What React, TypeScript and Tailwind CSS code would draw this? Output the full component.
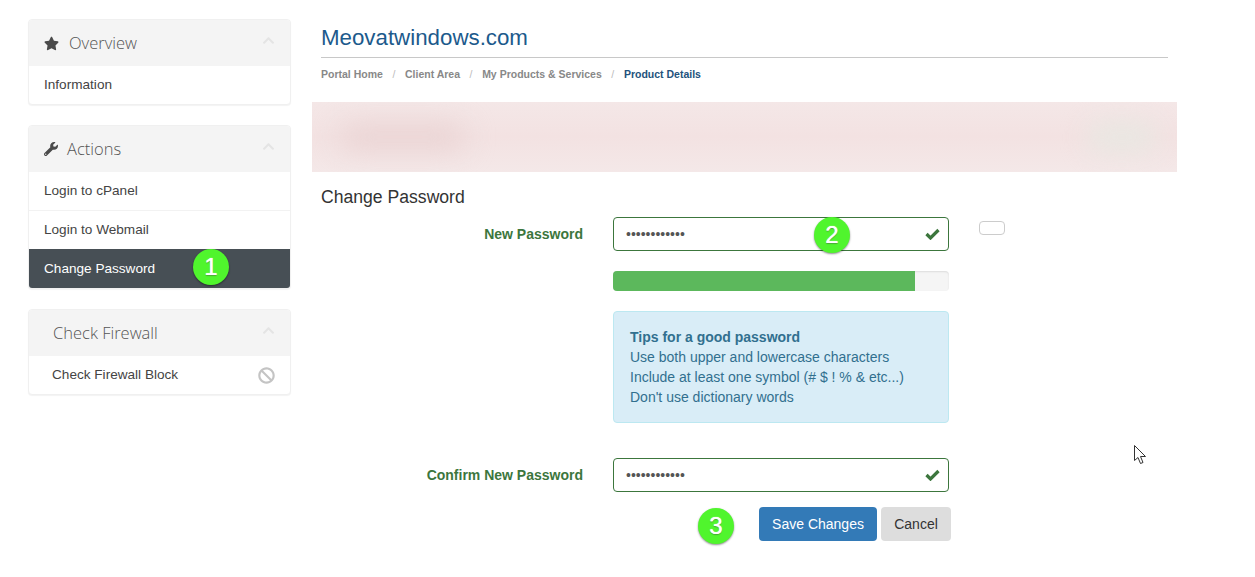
import { FaStar, FaWrench, FaBan, FaChevronUp } from "react-icons/fa";
import type { ReactNode } from "react";

function Badge({ n, className }: { n: number; className: string }) {
  return (
    <span
      className={`absolute flex h-[36px] w-[36px] items-center justify-center rounded-full bg-[#50f52d] text-[24px] text-white shadow-[0_1px_2px_rgba(0,0,0,0.45)] [text-shadow:0_0_1px_#fff,0_1px_1px_rgba(0,0,0,0.35)] ${className}`}
    >
      {n}
    </span>
  );
}

function Panel({
  title,
  icon,
  titleClass,
  children,
}: {
  title: string;
  icon?: ReactNode;
  titleClass?: string;
  children: ReactNode;
}) {
  return (
    <div className="rounded-[4px] border border-[#f0f0f0] bg-white shadow-[0_1px_1px_rgba(0,0,0,0.05)]">
      <div className="flex h-[46px] items-center rounded-t-[3px] bg-[#f4f4f4] pl-[15px] pr-[15px]">
        {icon}
        <h3
          className={`font-['Open_Sans'] text-[16.5px] font-light text-[#555] ${titleClass ?? ""}`}
        >
          {title}
        </h3>
        <FaChevronUp className="ml-auto mb-[5px] text-[13px] text-[#e4e4e4]" />
      </div>
      {children}
    </div>
  );
}

function Field({
  label,
  children,
}: {
  label: string;
  children: ReactNode;
}) {
  return (
    <div className="flex items-start">
      <label className="w-[271px] pt-[9px] text-right text-[14px] leading-[17px] font-bold text-[#3c763d]">
        {label}
      </label>
      <div className="ml-[30px] w-[336px]">{children}</div>
    </div>
  );
}

function PasswordInput() {
  return (
    <div className="relative">
      <input
        type="password"
        readOnly
        defaultValue="abcdefghijkl"
        className="h-[34px] w-full rounded-[4px] border border-[#3c763d] bg-white px-[12px] text-[14px] text-[#555] outline-none"
      />
      <svg
        className="absolute right-[9px] top-[11px]"
        width="15"
        height="12"
        viewBox="0 0 15 12"
      >
        <path d="M1.5 6 L5.5 10 L13.5 2" fill="none" stroke="#3c763d" strokeWidth="3.2" />
      </svg>
    </div>
  );
}

export default function App() {
  return (
    <div className="relative flex h-[577px] w-[1255px] overflow-hidden bg-white font-['Liberation_Sans',sans-serif] text-[14px] text-[#333]">
      {/* Sidebar */}
      <aside className="ml-[28px] flex w-[263px] shrink-0 flex-col gap-[20px] pt-[19px] text-[13.6px]">
        <Panel
          title="Overview"
          icon={<FaStar className="mr-[10px] text-[15px] text-[#4a4a4a]" />}
        >
          <div className="flex h-[38px] items-center pl-[15px] text-[#444]">
            Information
          </div>
        </Panel>

        <Panel
          title="Actions"
          icon={<FaWrench className="mr-[9px] text-[14px] text-[#4a4a4a]" />}
        >
          <div className="flex h-[39px] items-center border-b border-[#f2f2f2] pl-[15px] text-[#444]">
            Login to cPanel
          </div>
          <div className="flex h-[38px] items-center pl-[15px] text-[#444]">
            Login to Webmail
          </div>
          <div className="relative flex h-[39px] items-center rounded-b-[3px] bg-[#474f55] pl-[15px] pt-[1px] text-white">
            Change Password
            <Badge n={1} className="left-[164px] top-[0px]" />
          </div>
        </Panel>

        <Panel title="Check Firewall" titleClass="pl-[9px]">
          <div className="flex h-[38px] items-center pl-[23px] pr-[15px] text-[#444]">
            Check Firewall Block
            <FaBan className="ml-auto text-[17px] text-[#c4c4c4]" />
          </div>
        </Panel>
      </aside>

      {/* Main */}
      <main className="ml-[21px] w-[865px]">
        <div className="mx-[9px] mt-[23px] border-b border-[#c8c8c8] pb-[4px]">
          <h1 className="text-[22.3px] leading-[30px] text-[#1c5a8c]">
            Meovatwindows.com
          </h1>
        </div>
        <nav className="mx-[9px] mt-[9px] flex h-[16px] items-center text-[10.5px] font-bold text-[#888]">
          <span>Portal Home</span>
          <span className="px-[9.6px] font-normal text-[#bbb]">/</span>
          <span>Client Area</span>
          <span className="px-[9.6px] font-normal text-[#bbb]">/</span>
          <span>My Products &amp; Services</span>
          <span className="px-[9.6px] font-normal text-[#bbb]">/</span>
          <span className="text-[#23527c]">Product Details</span>
        </nav>

        {/* Blurred notice */}
        <div className="mt-[19px] flex h-[70px] items-center justify-between overflow-hidden bg-linear-to-b from-[#f4e7e7] via-[#f3e2e2] to-[#f4e8e8] pl-[28px] pr-[20px]">
          <div className="h-[24px] w-[125px] rounded-full bg-[#e9d2d2] blur-[14px]" />
          <div className="h-[32px] w-[70px] rounded-full bg-[#e9e7e2] blur-[12px]" />
        </div>

        <h2 className="mx-[9px] mt-[13px] text-[17.6px] leading-[24px] text-[#333]">
          Change Password
        </h2>

        <div className="relative mt-[8px]">
          <Field label="New Password">
            <PasswordInput />
          </Field>
          <Badge n={2} className="left-[502px] top-[0px]" />
          <div className="absolute left-[667px] top-[4px] h-[14px] w-[26px] rounded-[4px] border border-[#ccc] bg-white" />
        </div>

        <div className="ml-[301px] mt-[20px] h-[20px] w-[336px] overflow-hidden rounded-[4px] bg-[#f5f5f5] shadow-[inset_0_1px_2px_rgba(0,0,0,0.1)]">
          <div className="h-full w-[90%] bg-[#5cb85c]" />
        </div>

        <div className="ml-[301px] mt-[20px] h-[112px] w-[336px] rounded-[4px] border border-[#bce8f1] bg-[#d9edf7] pl-[16px] pt-[15px] leading-[20px] text-[#31708f]">
          <strong>Tips for a good password</strong>
          <br />
          Use both upper and lowercase characters
          <br />
          Include at least one symbol (# $ ! % &amp; etc...)
          <br />
          Don't use dictionary words
        </div>

        <div className="mt-[35px]">
          <Field label="Confirm New Password">
            <PasswordInput />
          </Field>
        </div>

        <div className="relative mt-[15px] flex justify-end gap-[4px] pr-[226px]">
          <Badge n={3} className="left-[386px] top-[1px]" />
          <button className="h-[34px] w-[118px] rounded-[4px] bg-[#337ab7] text-white">
            Save Changes
          </button>
          <button className="h-[34px] w-[70px] rounded-[4px] bg-[#dddddd] text-[#333]">
            Cancel
          </button>
        </div>
      </main>

      {/* Mouse pointer */}
      <svg
        className="absolute left-[1134px] top-[445px]"
        width="13"
        height="20"
        viewBox="0 0 13 20"
      >
        <path
          d="M0.5 0.5 L0.5 15.5 L4 12.5 L6.5 18.5 L9 17.5 L6.5 11.5 L11.5 11.5 Z"
          fill="#fff"
          stroke="#333"
          strokeWidth="1"
        />
      </svg>
    </div>
  );
}
